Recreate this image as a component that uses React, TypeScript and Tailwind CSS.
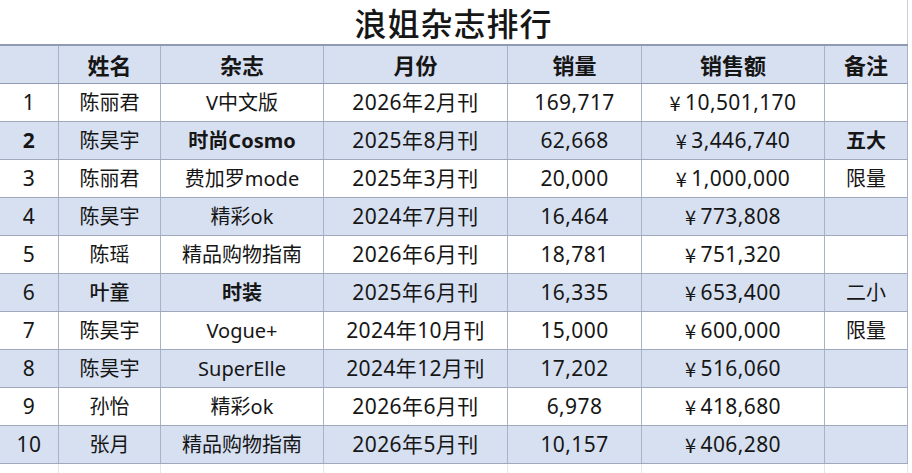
import React from "react";

type Row = {
  rank: string;
  name: string;
  mag: string;
  month: string;
  qty: string;
  amount: string;
  note: string;
  bold?: boolean;
  boldMag?: boolean;
};

const rows: Row[] = [
  { rank: "1", name: "陈丽君", mag: "V中文版", month: "2026年2月刊", qty: "169,717", amount: "10,501,170", note: "" },
  { rank: "2", name: "陈昊宇", mag: "时尚Cosmo", month: "2025年8月刊", qty: "62,668", amount: "3,446,740", note: "五大", bold: true },
  { rank: "3", name: "陈丽君", mag: "费加罗mode", month: "2025年3月刊", qty: "20,000", amount: "1,000,000", note: "限量" },
  { rank: "4", name: "陈昊宇", mag: "精彩ok", month: "2024年7月刊", qty: "16,464", amount: "773,808", note: "" },
  { rank: "5", name: "陈瑶", mag: "精品购物指南", month: "2026年6月刊", qty: "18,781", amount: "751,320", note: "" },
  { rank: "6", name: "叶童", mag: "时装", month: "2025年6月刊", qty: "16,335", amount: "653,400", note: "二小", boldMag: true },
  { rank: "7", name: "陈昊宇", mag: "Vogue+", month: "2024年10月刊", qty: "15,000", amount: "600,000", note: "限量" },
  { rank: "8", name: "陈昊宇", mag: "SuperElle", month: "2024年12月刊", qty: "17,202", amount: "516,060", note: "" },
  { rank: "9", name: "孙怡", mag: "精彩ok", month: "2026年6月刊", qty: "6,978", amount: "418,680", note: "" },
  { rank: "10", name: "张月", mag: "精品购物指南", month: "2026年5月刊", qty: "10,157", amount: "406,280", note: "" },
];

const grid = "grid grid-cols-[59px_102px_163px_184px_134px_183px_83px] w-[908px]";
const cell = "flex items-center justify-center border-r border-[#a9b3c6] whitespace-nowrap";
const num = "text-[21px] tracking-[0.4px]";
const cjk = { fontFamily: '"Noto Sans CJK SC", sans-serif' };

export default function App() {
  return (
    <div
      className="w-[912px] h-[473px] bg-white text-[#161616] overflow-hidden"
      style={{ fontFamily: '"Noto Sans", "Noto Sans CJK SC", sans-serif' }}
    >
      <div className="h-[44px] w-[908px] flex items-center justify-center border-r border-[#c9cfda]" style={cjk}>
        <span className="text-[32px] font-medium tracking-[1px] leading-none">浪姐杂志排行</span>
      </div>
      <div
        className={`${grid} h-[40px] bg-[#d7e0f1] border-t-2 border-b border-[#8f9bb2] text-[22px] font-bold`}
        style={cjk}
      >
        <div className={cell}></div>
        <div className={cell}>姓名</div>
        <div className={cell}>杂志</div>
        <div className={cell}>月份</div>
        <div className={cell}>销量</div>
        <div className={cell}>销售额</div>
        <div className={cell}>备注</div>
      </div>
      {rows.map((r, i) => (
        <div
          key={r.rank}
          className={`${grid} h-[38px] border-b border-[#9ea9bd] text-[20px] ${i % 2 === 1 ? "bg-[#d7e0f1]" : "bg-white"}`}
        >
          <div className={`${cell} ${num} ${r.bold ? "font-bold" : ""}`}>{r.rank}</div>
          <div className={`${cell} ${r.boldMag ? "font-medium" : ""}`}>{r.name}</div>
          <div className={`${cell} ${r.bold || r.boldMag ? "font-bold" : ""}`}>{r.mag}</div>
          <div className={`${cell} ${num}`}>{r.month}</div>
          <div className={`${cell} ${num}`}>{r.qty}</div>
          <div className={`${cell} ${num}`}>
            <span className="mr-[4px] text-[20px]" style={cjk}>
              ¥
            </span>
            {r.amount}
          </div>
          <div className={`${cell} ${r.bold ? "font-bold" : ""}`}>{r.note}</div>
        </div>
      ))}
      <div className={`${grid} h-[12px]`}>
        {Array.from({ length: 7 }).map((_, k) => (
          <div key={k} className="border-r border-[#e3e7ee]"></div>
        ))}
      </div>
    </div>
  );
}
